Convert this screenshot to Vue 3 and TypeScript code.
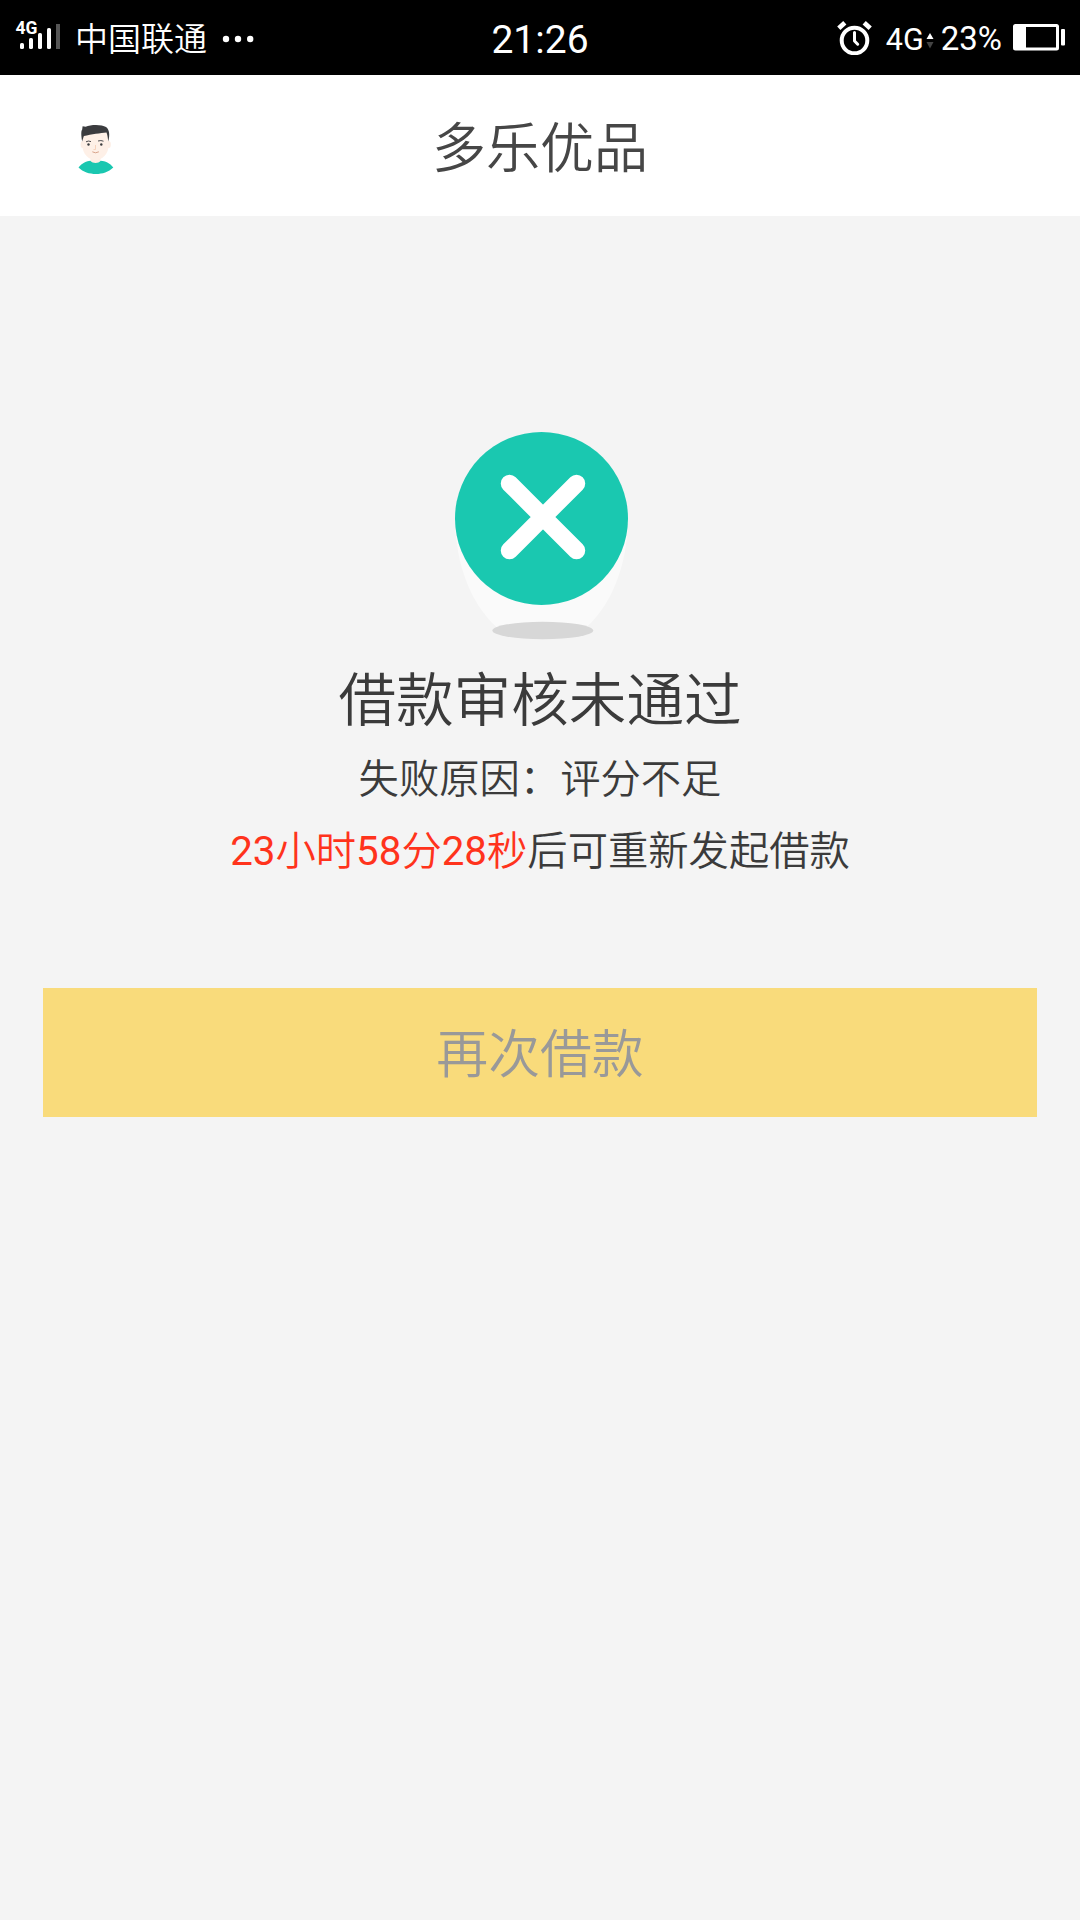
<script setup lang="ts">
const remaining: string = '23小时58分28秒'
const signalBars = [
  { x: 20, y: 43, h: 6, color: '#fff' },
  { x: 29, y: 38, h: 11, color: '#fff' },
  { x: 38, y: 33, h: 16, color: '#fff' },
  { x: 47, y: 28, h: 21, color: '#fff' },
  { x: 56, y: 24, h: 25, color: '#555' },
]
</script>

<template>
  <div class="screen">
    <div class="status">
      <div class="side">
        <svg class="signal" width="62" height="75" viewBox="0 0 62 75">
          <text x="15.5" y="33.5" fill="#fff" font-size="17.5" font-weight="700">4G</text>
          <rect
            v-for="bar in signalBars"
            :key="bar.x"
            :x="bar.x"
            :y="bar.y"
            width="4"
            :height="bar.h"
            :rx="bar.color === '#fff' ? 1.6 : 0"
            :fill="bar.color"
          />
        </svg>
        <span class="carrier">中国联通</span>
        <svg class="dots" width="34" height="8" viewBox="0 0 34 8">
          <circle cx="4" cy="4" r="3.2" fill="#fff" />
          <circle cx="16" cy="4" r="3.2" fill="#fff" />
          <circle cx="28.2" cy="4" r="3.2" fill="#fff" />
        </svg>
      </div>
      <div class="clock">21:26</div>
      <div class="side right">
        <svg class="alarm" width="36" height="34" viewBox="0 0 36 34" fill="none" stroke="#fff">
          <circle cx="17.5" cy="19.5" r="12.8" stroke-width="4" />
          <path d="M17.5 11.5v8.5l3.2 3.2" stroke-width="3" stroke-linecap="round" stroke-linejoin="round" />
          <path d="M1.8 7.2 7.8 1.8M27.2 1.8l6 5.4" stroke-width="4.8" />
        </svg>
        <span class="network">4G</span>
        <svg class="arrows" width="8" height="16" viewBox="0 0 8 16">
          <path d="M4 0 7.5 6h-7z" fill="#fff" />
          <path d="M4 15.5 7.5 9h-7z" fill="#444" />
        </svg>
        <span class="percent">23%</span>
        <svg class="battery" width="52" height="27" viewBox="0 0 52 27">
          <rect x="1.5" y="1.5" width="43" height="23.5" rx="1" fill="none" stroke="#fff" stroke-width="3" />
          <rect x="1" y="1" width="12" height="24" fill="#fff" />
          <rect x="48" y="5" width="4" height="16.5" rx="1" fill="#fff" />
        </svg>
      </div>
    </div>

    <header class="header">
      <svg class="avatar" width="36" height="50" viewBox="0 0 36 50">
        <path d="M12.5 34h10v6h-10z" fill="#fdeee4" />
        <path d="M.5 43.5C4 39 9 37 12.3 36.8c2.6 3 8 3 10.4 0C27 37 32 39 35.3 43.5 30.5 48 24.5 50 18 50S5 48 .5 43.5z" fill="#1ac7b0" />
        <ellipse cx="4.6" cy="20.5" rx="2" ry="3.6" fill="#fdeee4" />
        <ellipse cx="30.8" cy="20.5" rx="2" ry="3.6" fill="#fdeee4" />
        <path d="M4.5 8h26v14c0 8-6.5 14-13 14s-13-6-13-14z" fill="#fef0e7" />
        <path d="M4.2 17.5C3 11 3 7 4.2 5.5L4.6 2.2l3 .6C13 .2 24 .3 28 3c3.5 2.5 4 8 2.3 14.5-.5-3-.6-6-1.8-9-6 .5-15 1.8-22.6 3.600-.7 1.600-1 3-1.700 5.400z" fill="#3b3c3f" />
        <path d="M8 17.800q2.500-1.400 5-.2M20 17q3-1 5.500.2" fill="none" stroke="#3b3c3f" stroke-width=".9" />
        <circle cx="10.500" cy="20.500" r="1.200" fill="#3b3c3f" />
        <circle cx="23.300" cy="20.500" r="1.200" fill="#3b3c3f" />
        <path d="M17.500 21v4.500h-2" fill="none" stroke="#f7d3bd" stroke-width="1" />
        <path d="M14.300 27.800q3.200 2 6.600 0" fill="none" stroke="#d9a48b" stroke-width="1" />
      </svg>
      <h1 class="title">多乐优品</h1>
    </header>

    <main class="result">
      <svg class="badge" width="176" height="210" viewBox="0 0 176 210">
        <path d="M1 86A86.500 128 0 0 0 47 199h81A86.500 128 0 0 0 174 86z" fill="#fafafa" />
        <circle cx="87.500" cy="86.500" r="86.500" fill="#1ac8b0" />
        <path d="m55.500 51.500 67 67M122.500 51.500l-67 67" stroke="#fff" stroke-width="17.500" stroke-linecap="round" />
        <ellipse cx="88.800" cy="198.500" rx="50.500" ry="8.700" fill="#d7d7d7" />
      </svg>
      <h2 class="heading">借款审核未通过</h2>
      <p class="line">失败原因：评分不足</p>
      <p class="line"><span class="time">{{ remaining }}</span>后可重新发起借款</p>
      <button class="again" type="button" disabled>再次借款</button>
    </main>
  </div>
</template>

<style>
body {
  background: #f4f4f4;
}
</style>

<style scoped>
.screen {
  width: 1080px;
  height: 1920px;
  overflow: hidden;
  background: #f4f4f4;
  color: #3b3b3b;
  font-family: Roboto, "Noto Sans CJK SC DemiLight", "Noto Sans CJK SC", sans-serif;
  font-weight: 400;
}
svg {
  display: block;
  flex: none;
}
.status {
  display: grid;
  grid-template-columns: 1fr auto 1fr;
  align-items: center;
  height: 75px;
  background: #000;
  color: #fff;
  white-space: nowrap;
}
.side {
  display: flex;
  align-items: center;
}
.right {
  justify-content: flex-end;
  padding-right: 15px;
}
.carrier {
  margin-left: 13px;
  padding-top: 4px;
  font-size: 33px;
  line-height: 71px;
}
.dots {
  margin: 2px 0 0 15px;
}
.clock {
  padding-top: 5px;
  font-size: 39px;
  line-height: 70px;
}
.alarm {
  margin-right: 13px;
}
.network {
  padding-top: 3px;
  font-size: 30.5px;
}
.arrows {
  margin: 6px 7px 0 2px;
}
.percent {
  padding-top: 2px;
  font-size: 33px;
}
.battery {
  margin-left: 11px;
}
.header {
  display: grid;
  grid-template-columns: 1fr auto 1fr;
  align-items: center;
  height: 141px;
  background: #fff;
}
.avatar {
  margin: 7px 0 0 78px;
}
.title {
  margin: 0;
  padding-top: 9px;
  font-size: 54px;
  font-weight: 400;
  line-height: 132px;
  color: #464646;
}
.result {
  display: flex;
  flex-direction: column;
  align-items: center;
  padding: 216px 43px 0;
}
.badge {
  margin-left: 4px;
}
.heading {
  margin: 17px 0 0;
  font-size: 57.6px;
  font-weight: 400;
  line-height: 86px;
}
.line {
  margin: 0;
  font-size: 40.32px;
  line-height: 71.5px;
}
.heading + .line {
  margin-top: -1px;
}
.time {
  color: #ff331c;
}
.again {
  width: 994px;
  height: 129px;
  margin: 101px 0 0;
  padding: 0 0 5px;
  border: 0;
  background: #f9db7b;
  color: #999;
  font: inherit;
  font-size: 51.84px;
}
</style>
